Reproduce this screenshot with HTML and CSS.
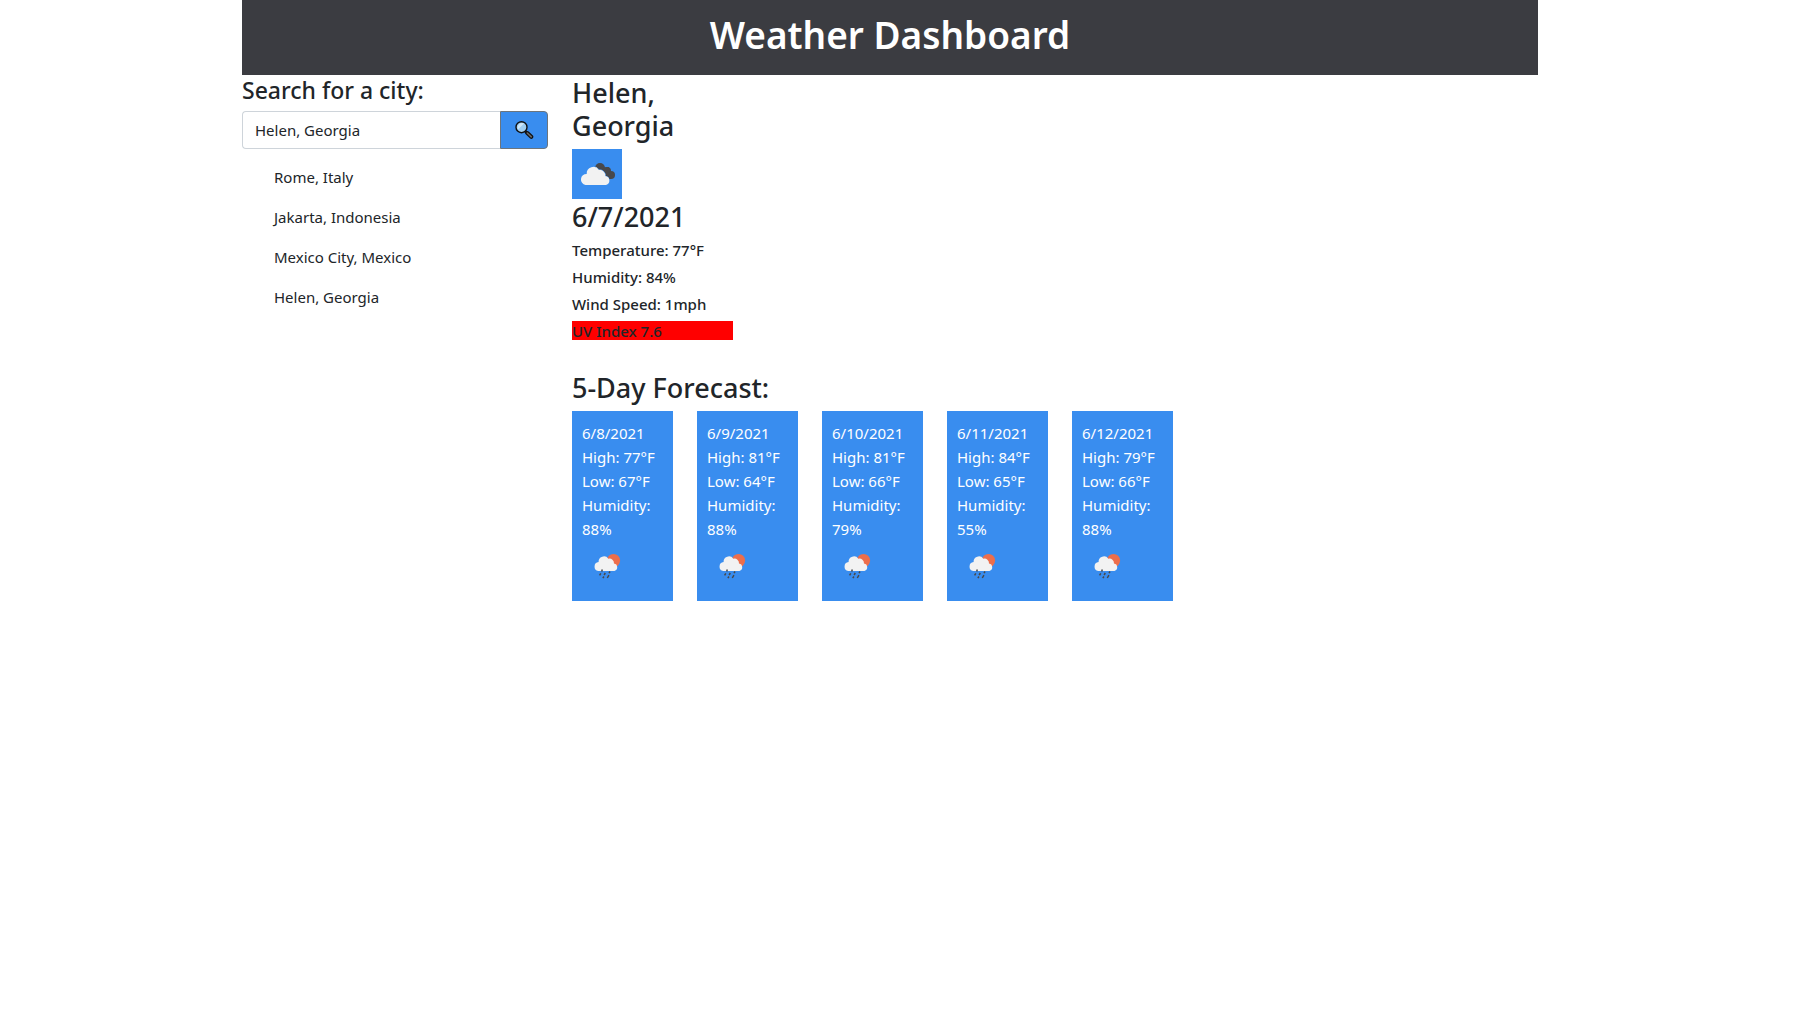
FILE: index.html
```html
<!DOCTYPE html>
<html lang="en">
<head>
<meta charset="utf-8">
<meta name="viewport" content="width=device-width, initial-scale=1">
<title>Weather Dashboard</title>
<link rel="stylesheet" href="styles.css">
</head>
<body>
<svg class="sprite" aria-hidden="true">
  <symbol id="clouds" viewBox="0 0 50 50">
    <g fill="#48484a">
      <circle cx="28" cy="19" r="5"/><circle cx="35" cy="22" r="4"/><circle cx="39" cy="26" r="4"/>
      <path d="M28 19l9-1 2 12H30z"/>
    </g>
    <path d="M13.500 36a5.600 5.600 0 0 1 1.200-11.100 6.700 6.700 0 0 1 12.300-4 5.500 5.500 0 0 1 6.300 6.100A4.600 4.600 0 0 1 34 36z" fill="#f2f2f2" stroke="#398def" stroke-width="1" paint-order="stroke"/>
  </symbol>
  <symbol id="rain" viewBox="0 0 50 50">
    <circle cx="31.500" cy="19.500" r="6.600" fill="#ec6e4c"/>
    <path d="M16.200 30a4.500 4.500 0 0 1 .4-8.900 5.300 5.300 0 0 1 9.700-3.300 4.500 4.500 0 0 1 5.700 4.800A3.800 3.800 0 0 1 32.500 30z" fill="#f2f2f2"/>
    <path d="M20.300 28.600l-.6 1.800M18.800 32.300l-1.200 2M23.300 32l-1.200 2M28 30.500l-1 1.600M21.900 35.500l-1 1.700M26.900 34.200l-1.600 2.800" stroke="#48484a" stroke-width="1.500" fill="none"/>
  </symbol>
</svg>
<div class="page">
  <header class="banner"><h1>Weather Dashboard</h1></header>
  <div class="columns">
    <aside class="column">
      <form class="search">
        <label class="search-label" for="city">Search for a city:</label>
        <div class="search-group">
          <input class="search-input" id="city" type="text" value="Helen, Georgia">
          <button class="search-button" type="button" aria-label="Search">
            <svg class="search-icon" viewBox="0 0 20 20" aria-hidden="true">
              <path d="M11.300 11.300l1.700 1.700" stroke="#111" stroke-width="2.600"/>
              <path d="M13.300 13l4 3.800" stroke="#111" stroke-width="4" stroke-linecap="round"/>
              <path d="M13.300 13l4 3.800" stroke="#6a6a6a" stroke-width="1.600" stroke-linecap="round"/>
              <circle cx="7.500" cy="7.200" r="5.500" fill="#9fcdf0" stroke="#111" stroke-width="1.400"/>
              <path d="M4 9.500L10 3.500A4.600 4.600 0 0 0 4 9.500z" fill="#cfe6f7"/>
            </svg>
          </button>
        </div>
      </form>
      <ul class="history">
        <li>Rome, Italy</li>
        <li>Jakarta, Indonesia</li>
        <li>Mexico City, Mexico</li>
        <li>Helen, Georgia</li>
      </ul>
    </aside>
    <main class="column">
      <section class="current">
        <h2>Helen, Georgia</h2>
        <svg class="icon" role="img" aria-label="Broken clouds"><use href="#clouds"/></svg>
        <h2>6/7/2021</h2>
        <p>Temperature: 77°F</p>
        <p>Humidity: 84%</p>
        <p>Wind Speed: 1mph</p>
        <p class="uv-high">UV Index 7.6</p>
      </section>
      <section>
        <h2>5-Day Forecast:</h2>
        <div class="forecast">
          <article class="card"><div>6/8/2021</div><div>High: 77°F</div><div>Low: 67°F</div><div>Humidity: 88%</div><svg class="icon" role="img" aria-label="Rain"><use href="#rain"/></svg></article>
          <article class="card"><div>6/9/2021</div><div>High: 81°F</div><div>Low: 64°F</div><div>Humidity: 88%</div><svg class="icon" role="img" aria-label="Rain"><use href="#rain"/></svg></article>
          <article class="card"><div>6/10/2021</div><div>High: 81°F</div><div>Low: 66°F</div><div>Humidity: 79%</div><svg class="icon" role="img" aria-label="Rain"><use href="#rain"/></svg></article>
          <article class="card"><div>6/11/2021</div><div>High: 84°F</div><div>Low: 65°F</div><div>Humidity: 55%</div><svg class="icon" role="img" aria-label="Rain"><use href="#rain"/></svg></article>
          <article class="card"><div>6/12/2021</div><div>High: 79°F</div><div>Low: 66°F</div><div>Humidity: 88%</div><svg class="icon" role="img" aria-label="Rain"><use href="#rain"/></svg></article>
        </div>
      </section>
    </main>
  </div>
</div>
</body>
</html>
```
FILE: styles.css
```css
* { box-sizing: border-box; }

body {
  margin: 0;
  padding-right: 36px;
  background: #fff;
  color: #212529;
  font: 400 15px/24px "Noto Sans", sans-serif;
}

h1, h2, p, ul { margin: 0; }

.sprite { display: none; }

.page {
  max-width: 1320px;
  margin: 0 auto;
  padding: 0 12px;
}

.banner {
  padding: 11px 0 16px;
  background: #3b3c41;
  color: #fff;
  text-align: center;
}

h1 {
  font-size: 37px;
  font-weight: 600;
  line-height: 48px;
}

h2 {
  margin-bottom: 7px;
  font-size: 27px;
  font-weight: 500;
  line-height: 33px;
}

.columns {
  display: grid;
  grid-template-columns: minmax(0, 1fr) minmax(0, 3fr);
  margin: 0 -12px;
  padding-top: 1px;
}

.column { padding: 0 12px; }

.search-label {
  display: block;
  margin-bottom: 6px;
  font-size: 23px;
  font-weight: 500;
  line-height: 29px;
}

.search-group { display: flex; }

.search-input {
  flex: 1;
  min-width: 0;
  height: 38px;
  padding: 6px 12px;
  border: 1px solid #ced4da;
  border-right: 0;
  border-radius: 4px 0 0 4px;
  background: #fff;
  color: #212529;
  font: inherit;
}

.search-button {
  display: flex;
  align-items: center;
  justify-content: center;
  width: 48px;
  height: 38px;
  padding: 0;
  border: 1px solid #6c757d;
  border-radius: 0 4px 4px 0;
  background: #398def;
}

.search-icon {
  width: 20px;
  height: 20px;
}

.history {
  padding: 8px 0 0 32px;
  list-style: none;
}

.history li { padding: 8px 0; }

.current {
  width: calc(100% / 6);
  margin-bottom: 31px;
}

.icon {
  display: block;
  width: 50px;
  height: 50px;
  background: #398def;
}

.current .icon { margin-bottom: 1px; }

.current p {
  margin-bottom: 8px;
  padding-top: 2px;
  font-weight: 500;
  line-height: 17px;
}

.current p:last-child { margin-bottom: 0; }

.current .uv-high { background: #f00; }

.forecast {
  display: flex;
  gap: 24px;
}

.card {
  flex: 0 1 101px;
  padding: 10px;
  background: #398def;
  color: #fff;
}
```
